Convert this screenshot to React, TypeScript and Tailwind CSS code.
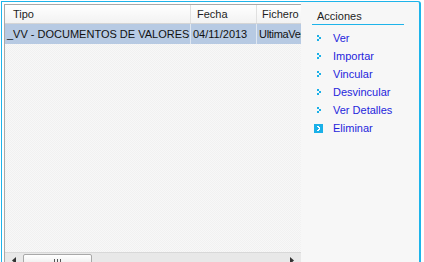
import React from 'react'

const actions = ['Ver', 'Importar', 'Vincular', 'Desvincular', 'Ver Detalles']

function Bullet() {
  return (
    <svg width="5" height="7" viewBox="0 0 5 7" className="shrink-0">
      <rect x="0" y="0" width="2" height="2" fill="#1ab0e8" />
      <rect x="2" y="2" width="2" height="2" fill="#1ab0e8" />
      <rect x="2" y="3" width="2" height="1" fill="#1ab0e8" />
      <rect x="0" y="4" width="2" height="2" fill="#1ab0e8" />
    </svg>
  )
}

function DeleteIcon() {
  return (
    <svg width="9" height="9" viewBox="0 0 9 9" className="shrink-0">
      <rect width="9" height="9" fill="#1ab0e8" />
      <rect x="3" y="2" width="2" height="1" fill="#fff" />
      <rect x="4" y="3" width="2" height="1" fill="#fff" />
      <rect x="5" y="4" width="1" height="1" fill="#fff" />
      <rect x="4" y="5" width="2" height="1" fill="#fff" />
      <rect x="3" y="6" width="2" height="1" fill="#fff" />
    </svg>
  )
}

export default function App() {
  return (
    <div className="w-[424px] h-[262px] bg-white overflow-hidden font-['Liberation_Sans',Arial,sans-serif] text-[11px]">
      <div className="ml-px mt-px w-[420px] h-[261px] border-l border-t border-r-2 border-[#1eb4ea] rounded-tr-[3px] bg-[#f7f7f7] flex overflow-hidden">
        <div className="w-[299px] pl-[2px] pt-[2px] bg-white shrink-0 flex flex-col overflow-hidden">
          <div className="w-[297px] border-t border-l border-[#a9a9a9] flex flex-col">
            <div className="h-[19px] flex bg-gradient-to-b from-white to-[#f2f2f2] border-b border-[#d5d5d5] text-[#1e1e1e]">
              <div className="w-[186px] pl-[8px] flex items-center border-r border-[#e0e0e0]">Tipo</div>
              <div className="w-[66px] pl-[6px] flex items-center border-r border-[#e0e0e0]">Fecha</div>
              <div className="flex-1 pl-[5px] flex items-center whitespace-nowrap overflow-hidden">Fichero</div>
            </div>
            <div className="h-[20px] flex bg-[#b7cae3] text-[#111]">
              <div className="w-[186px] pl-[2px] flex items-center border-r border-[#dfe7f1] whitespace-nowrap overflow-hidden">_VV - DOCUMENTOS DE VALORES</div>
              <div className="w-[66px] pl-[2px] flex items-center border-r border-[#dfe7f1]">04/11/2013</div>
              <div className="flex-1 pl-[2px] flex items-center whitespace-nowrap overflow-hidden tracking-[-0.3px]">UltimaVersion.pdf</div>
            </div>
            <div className="h-[208px] bg-[repeating-conic-gradient(#f1f1f1_0%_25%,#f8f8f8_0%_50%)] bg-[length:2px_2px]" />
            <div className="h-[17px] flex items-start bg-[#e8e8e8] border-t border-[#d8d8d8]">
              <div className="w-[18px] h-full flex items-start justify-center pt-[4px]">
                <svg width="5" height="7" viewBox="0 0 5 7"><path d="M4 0L0 3.5L4 7Z" fill="#333" /></svg>
              </div>
              <div className="w-[69px] h-[15px] mt-px rounded-[2px] border border-[#a8a8a8] bg-gradient-to-b from-white to-[#e6e6e6] flex justify-center pt-[4px]">
                <svg width="7" height="6" viewBox="0 0 7 6">
                  <rect x="0" y="0" width="1" height="6" fill="#555" />
                  <rect x="3" y="0" width="1" height="6" fill="#555" />
                  <rect x="6" y="0" width="1" height="6" fill="#555" />
                </svg>
              </div>
              <div className="flex-1" />
              <div className="w-[18px] h-full flex justify-center pt-[4px]">
                <svg width="5" height="7" viewBox="0 0 5 7"><path d="M0 0L4 3.5L0 7Z" fill="#333" /></svg>
              </div>
            </div>
          </div>
        </div>
        <div className="flex-1 pt-[7px] pl-[11px]">
          <div className="w-[92px] border-b border-[#1eb4ea] pl-[5px] pb-[1px] text-[#1e1e1e] leading-[14px]">Acciones</div>
          <div className="flex flex-col pt-[4px]">
            {actions.map(a => (
              <div key={a} className="h-[18px] flex items-center gap-[11px] pl-[5px] text-[#1f1fdc]">
                <Bullet />
                <span>{a}</span>
              </div>
            ))}
            <div className="h-[18px] flex items-center gap-[10px] pl-[2px] text-[#1f1fdc]">
              <DeleteIcon />
              <span>Eliminar</span>
            </div>
          </div>
        </div>
      </div>
    </div>
  )
}
